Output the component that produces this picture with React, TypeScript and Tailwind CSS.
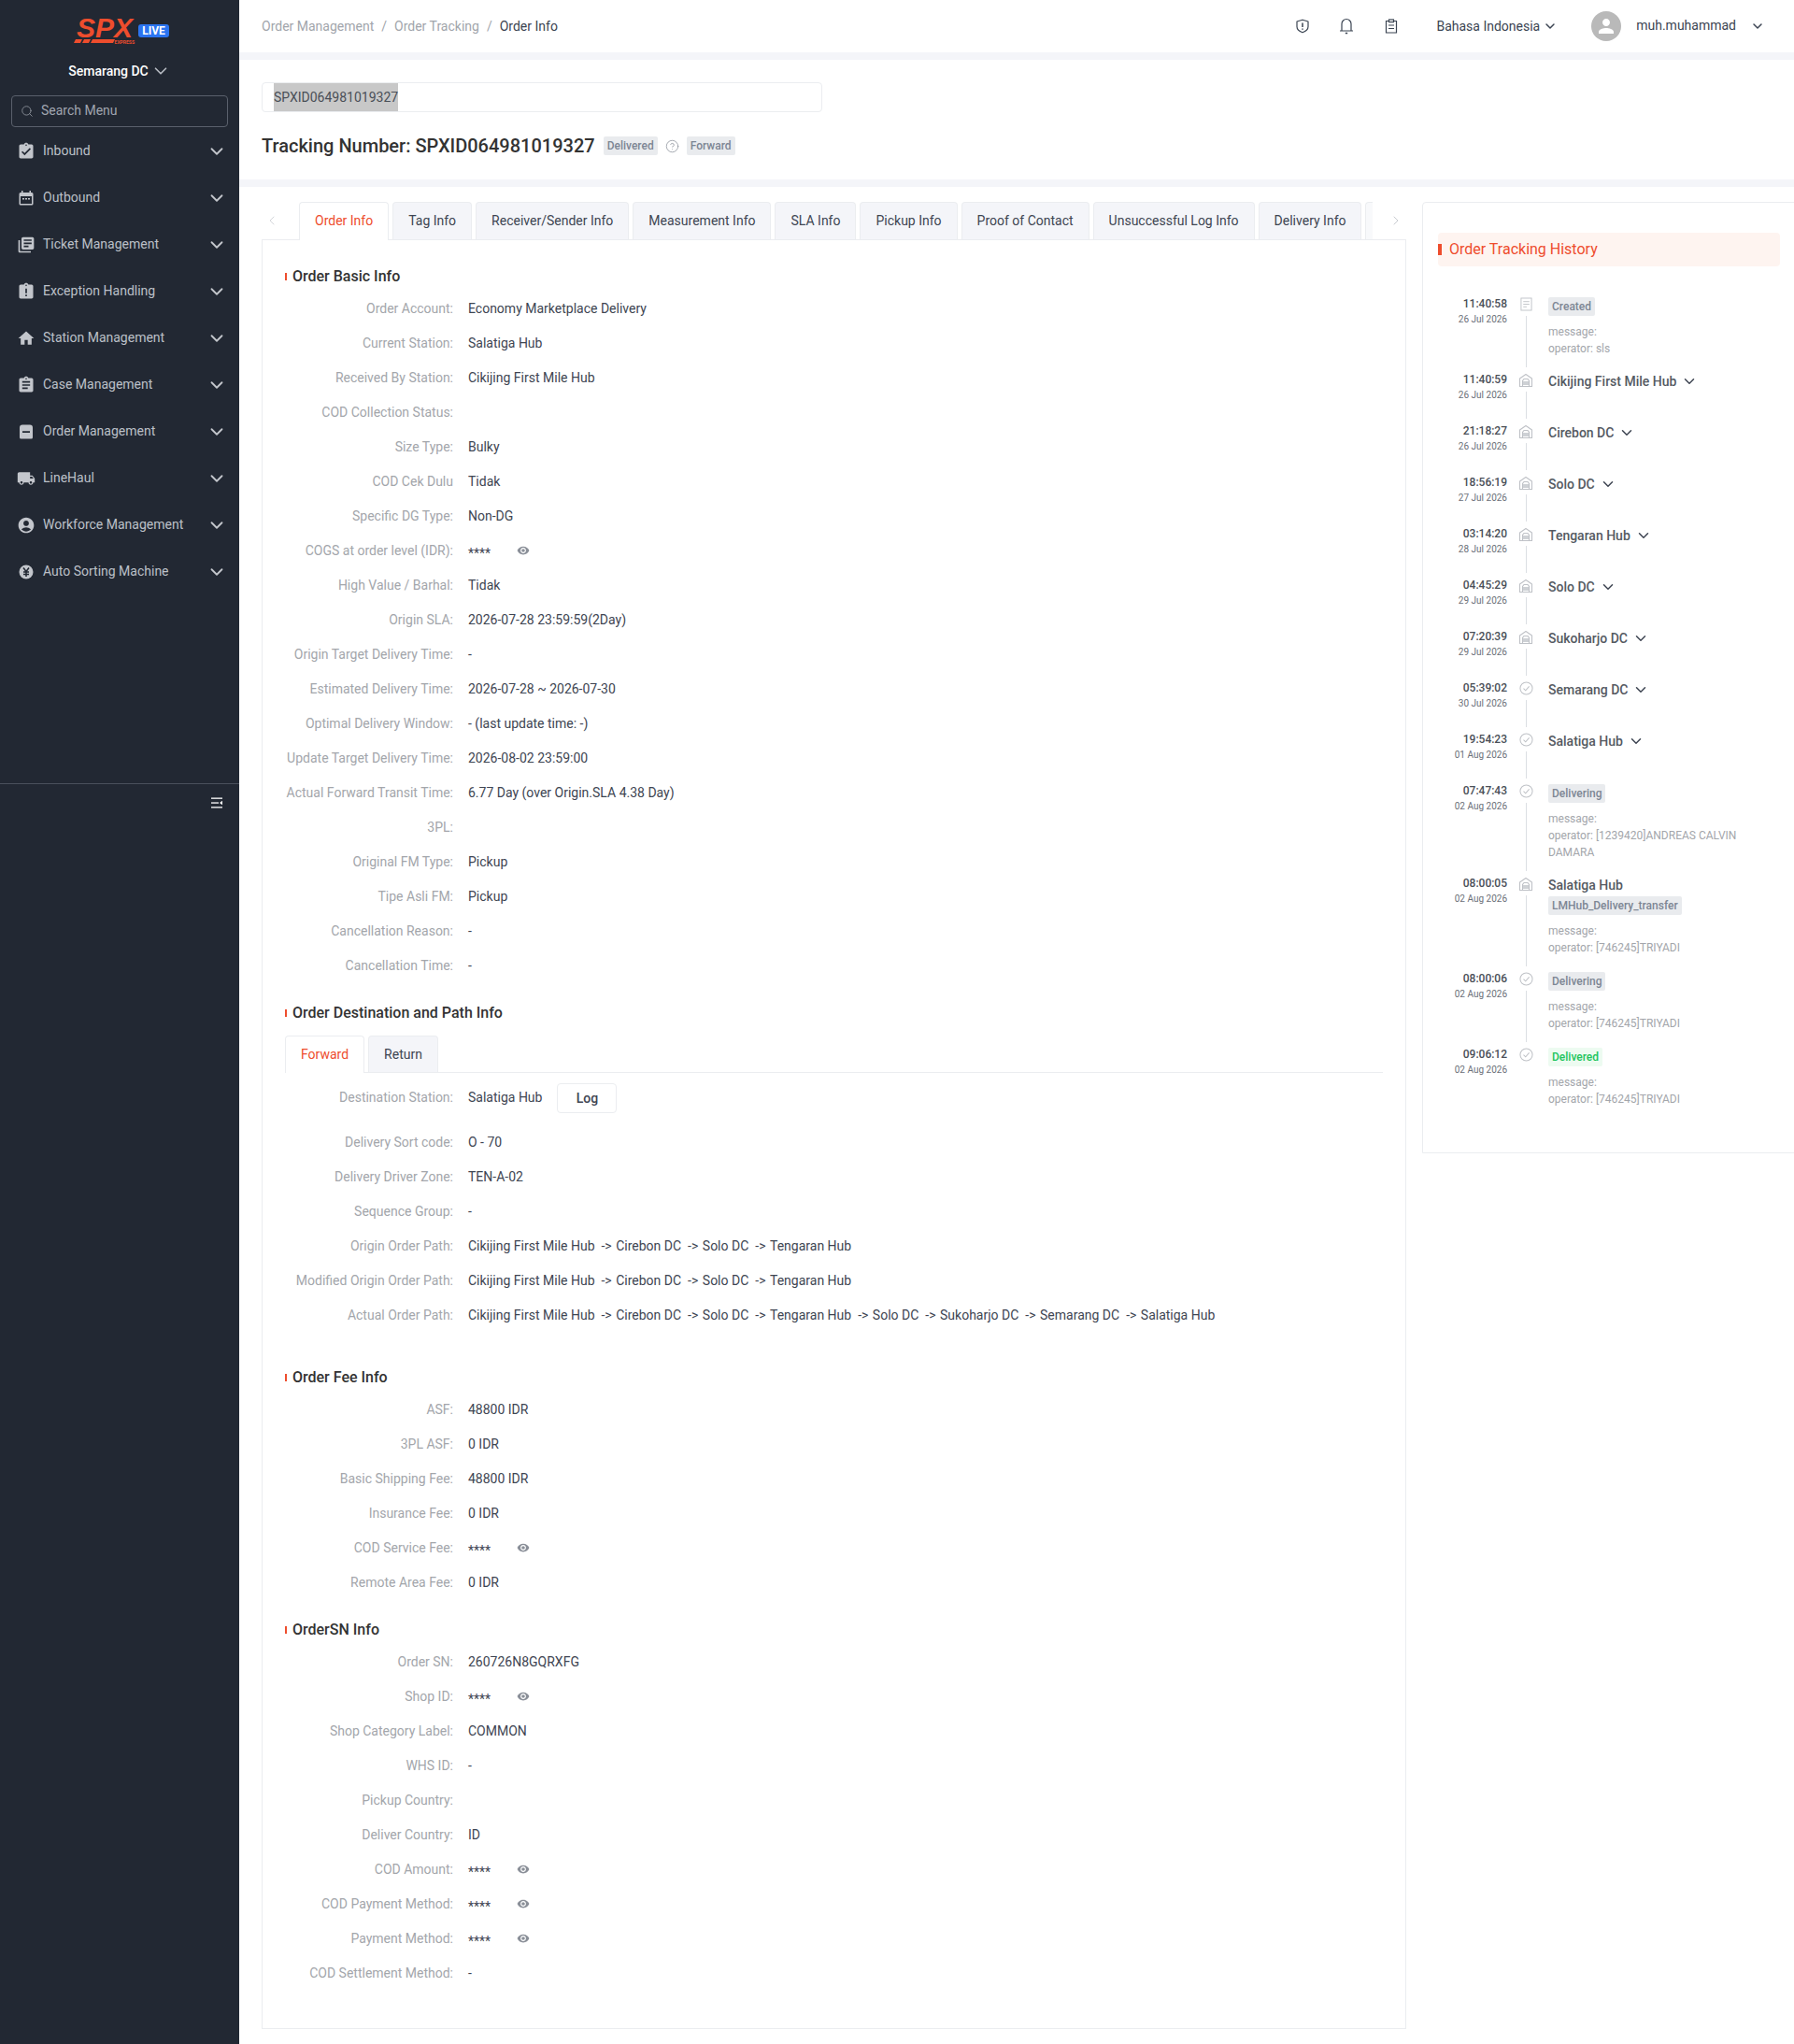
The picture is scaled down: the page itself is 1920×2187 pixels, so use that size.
import { Fragment } from 'react';
import { ChevronDown, ChevronLeft, ChevronRight, Search, CircleHelp } from 'lucide-react';
import {
  MdAssignmentTurnedIn,
  MdLibraryBooks,
  MdAssignmentLate,
  MdHome,
  MdAssignment,
  MdLocalShipping,
  MdAccountCircle,
  MdVisibility,
  MdPerson,
} from 'react-icons/md';

const menuIconClass = 'w-[20px] h-[20px]';

function OutboundIcon() {
  return (
    <svg viewBox="0 0 18 18" className="w-[18px] h-[18px]" fill="currentColor">
      <path fillRule="evenodd" d="M4 1h1.500v2h7V1H14v2h1a1.500 1.500 0 0 1 1.500 1.500V15a1.500 1.500 0 0 1-1.500 1.500H3A1.500 1.500 0 0 1 1.500 15V4.500A1.500 1.500 0 0 1 3 3h1V1zM3 7v8h12V7H3z" />
      <rect x="5" y="9" width="2" height="1.500" />
      <rect x="8" y="9" width="2" height="1.500" />
      <rect x="11" y="9" width="2" height="1.500" />
    </svg>
  );
}

function OrderIcon() {
  return (
    <svg viewBox="0 0 18 18" className="w-[18px] h-[18px]" fill="currentColor">
      <path fillRule="evenodd" d="M5 1.500h8a3 3 0 0 1 3 3V15a1.500 1.500 0 0 1-1.500 1.500h-11A1.500 1.500 0 0 1 2 15V4.500a3 3 0 0 1 3-3zM5 8.200v1.800h8V8.200H5z" />
    </svg>
  );
}

function YenIcon() {
  return (
    <svg viewBox="0 0 18 18" className="w-[18px] h-[18px]">
      <circle cx="9" cy="9" r="7.500" fill="currentColor" />
      <path d="M6 4.500 9 8.500 12 4.500M9 8.500V14M6 9h6M6 11.500h6" fill="none" stroke="#222833" strokeWidth="1.500" />
    </svg>
  );
}

function CollapseIcon() {
  return (
    <svg viewBox="0 0 14 14" className="w-[14px] h-[14px]" fill="#fff">
      <rect x="1" y="1.500" width="12" height="1.300" />
      <rect x="1" y="6.400" width="8" height="1.300" />
      <rect x="1" y="11.200" width="12" height="1.300" />
      <path d="M13 4.800v4.400L10 7z" />
    </svg>
  );
}

function HubIcon() {
  return (
    <svg viewBox="0 0 16 16" className="w-[16px] h-[16px]" fill="none" stroke="#bfc2c7" strokeWidth="1.100">
      <path d="M1.500 14.500V6L8 1.500 14.500 6v8.500z" strokeLinejoin="round" />
      <path d="M4.500 14.500V8.500L6 6.500h4l1.500 2v6" />
      <path d="M5 10h6M5 12h6" strokeWidth="1.300" />
    </svg>
  );
}

function CheckIcon() {
  return (
    <svg viewBox="0 0 16 16" className="w-[15px] h-[15px]" fill="none" stroke="#bfc2c7" strokeWidth="1.100">
      <circle cx="8" cy="8" r="7" />
      <path d="M4.800 8.200 7.200 10.500 11.300 5.800" />
    </svg>
  );
}

function DocIcon() {
  return (
    <svg viewBox="0 0 14 16" className="w-[13px] h-[15px]" fill="none" stroke="#bfc2c7" strokeWidth="1">
      <rect x="1" y="1" width="12" height="14" />
      <path d="M3.500 5h7M3.500 8h7M3.500 11h4" />
    </svg>
  );
}

function ShieldIcon() {
  return (
    <svg viewBox="0 0 14 16" className="w-[14px] h-[16px]" fill="none" stroke="currentColor" strokeWidth="1.200">
      <path d="M7 1.200 13 3v5.500c0 3-2.500 5-6 6.300-3.500-1.300-6-3.300-6-6.300V3z" strokeLinejoin="round" />
      <path d="M7 4.500v4.500M7 10.500v1.300" strokeWidth="1.500" />
    </svg>
  );
}

function BellIcon() {
  return (
    <svg viewBox="0 0 16 18" className="w-[16px] h-[18px]" fill="none" stroke="currentColor" strokeWidth="1.200">
      <path d="M1 14h14M3 14V6.500a5 5 0 0 1 10 0V14" />
      <path d="M6.800 16.500h2.400" strokeWidth="1.500" />
    </svg>
  );
}

function ClipboardIcon() {
  return (
    <svg viewBox="0 0 14 16" className="w-[14px] h-[16px]" fill="none" stroke="currentColor" strokeWidth="1.200">
      <path d="M4.500 2.500H1.500v12.500h11V2.500H9.500" />
      <rect x="4.500" y="1" width="5" height="2.600" />
      <path d="M4 7h6M4 10.500h6" />
    </svg>
  );
}

const menu = [
  { name: 'Inbound', icon: <MdAssignmentTurnedIn className={menuIconClass} /> },
  { name: 'Outbound', icon: <OutboundIcon /> },
  { name: 'Ticket Management', icon: <MdLibraryBooks className={menuIconClass} /> },
  { name: 'Exception Handling', icon: <MdAssignmentLate className={menuIconClass} /> },
  { name: 'Station Management', icon: <MdHome className={menuIconClass} /> },
  { name: 'Case Management', icon: <MdAssignment className={menuIconClass} /> },
  { name: 'Order Management', icon: <OrderIcon /> },
  { name: 'LineHaul', icon: <MdLocalShipping className={menuIconClass} /> },
  { name: 'Workforce Management', icon: <MdAccountCircle className={menuIconClass} /> },
  { name: 'Auto Sorting Machine', icon: <YenIcon /> },
];

const tabs = ['Order Info', 'Tag Info', 'Receiver/Sender Info', 'Measurement Info', 'SLA Info', 'Pickup Info', 'Proof of Contact', 'Unsuccessful Log Info', 'Delivery Info'];

type Row = { label: string; value?: string; secret?: boolean; path?: string[]; noColon?: boolean };

const basicRows: Row[] = [
  { label: 'Order Account', value: 'Economy Marketplace Delivery' },
  { label: 'Current Station', value: 'Salatiga Hub' },
  { label: 'Received By Station', value: 'Cikijing First Mile Hub' },
  { label: 'COD Collection Status' },
  { label: 'Size Type', value: 'Bulky' },
  { label: 'COD Cek Dulu', value: 'Tidak', noColon: true },
  { label: 'Specific DG Type', value: 'Non-DG' },
  { label: 'COGS at order level (IDR)', secret: true },
  { label: 'High Value / Barhal', value: 'Tidak' },
  { label: 'Origin SLA', value: '2026-07-28 23:59:59(2Day)' },
  { label: 'Origin Target Delivery Time', value: '-' },
  { label: 'Estimated Delivery Time', value: '2026-07-28 ~ 2026-07-30' },
  { label: 'Optimal Delivery Window', value: '- (last update time: -)' },
  { label: 'Update Target Delivery Time', value: '2026-08-02 23:59:00' },
  { label: 'Actual Forward Transit Time', value: '6.77 Day (over Origin.SLA 4.38 Day)' },
  { label: '3PL' },
  { label: 'Original FM Type', value: 'Pickup' },
  { label: 'Tipe Asli FM', value: 'Pickup' },
  { label: 'Cancellation Reason', value: '-' },
  { label: 'Cancellation Time', value: '-' },
];

const shortPath = ['Cikijing First Mile Hub', 'Cirebon DC', 'Solo DC', 'Tengaran Hub'];
const fullPath = ['Cikijing First Mile Hub', 'Cirebon DC', 'Solo DC', 'Tengaran Hub', 'Solo DC', 'Sukoharjo DC', 'Semarang DC', 'Salatiga Hub'];

const pathRows: Row[] = [
  { label: 'Delivery Driver Zone', value: 'TEN-A-02' },
  { label: 'Sequence Group', value: '-' },
  { label: 'Origin Order Path', path: shortPath },
  { label: 'Modified Origin Order Path', path: shortPath },
  { label: 'Actual Order Path', path: fullPath },
];

const feeRows: Row[] = [
  { label: 'ASF', value: '48800 IDR' },
  { label: '3PL ASF', value: '0 IDR' },
  { label: 'Basic Shipping Fee', value: '48800 IDR' },
  { label: 'Insurance Fee', value: '0 IDR' },
  { label: 'COD Service Fee', secret: true },
  { label: 'Remote Area Fee', value: '0 IDR' },
];

const snRows: Row[] = [
  { label: 'Order SN', value: '260726N8GQRXFG' },
  { label: 'Shop ID', secret: true },
  { label: 'Shop Category Label', value: 'COMMON' },
  { label: 'WHS ID', value: '-' },
  { label: 'Pickup Country' },
  { label: 'Deliver Country', value: 'ID' },
  { label: 'COD Amount', secret: true },
  { label: 'COD Payment Method', secret: true },
  { label: 'Payment Method', secret: true },
  { label: 'COD Settlement Method', value: '-' },
];

type Track = {
  time: string;
  date: string;
  icon: 'doc' | 'hub' | 'check';
  height: string;
  name?: string;
  caret?: boolean;
  tag?: string;
  tagClass?: string;
  operator?: string;
};

const grayTag = 'bg-[#e9ebee] text-[#7d8694]';

const history: Track[] = [
  { time: '11:40:58', date: '26 Jul 2026', icon: 'doc', height: 'h-[81px]', tag: 'Created', tagClass: grayTag, operator: 'operator: sls' },
  { time: '11:40:59', date: '26 Jul 2026', icon: 'hub', height: 'h-[55px]', name: 'Cikijing First Mile Hub', caret: true },
  { time: '21:18:27', date: '26 Jul 2026', icon: 'hub', height: 'h-[55px]', name: 'Cirebon DC', caret: true },
  { time: '18:56:19', date: '27 Jul 2026', icon: 'hub', height: 'h-[55px]', name: 'Solo DC', caret: true },
  { time: '03:14:20', date: '28 Jul 2026', icon: 'hub', height: 'h-[55px]', name: 'Tengaran Hub', caret: true },
  { time: '04:45:29', date: '29 Jul 2026', icon: 'hub', height: 'h-[55px]', name: 'Solo DC', caret: true },
  { time: '07:20:39', date: '29 Jul 2026', icon: 'hub', height: 'h-[55px]', name: 'Sukoharjo DC', caret: true },
  { time: '05:39:02', date: '30 Jul 2026', icon: 'check', height: 'h-[55px]', name: 'Semarang DC', caret: true },
  { time: '19:54:23', date: '01 Aug 2026', icon: 'check', height: 'h-[55px]', name: 'Salatiga Hub', caret: true },
  { time: '07:47:43', date: '02 Aug 2026', icon: 'check', height: 'h-[99px]', tag: 'Delivering', tagClass: grayTag, operator: 'operator: [1239420]ANDREAS CALVIN DAMARA' },
  { time: '08:00:05', date: '02 Aug 2026', icon: 'hub', height: 'h-[102px]', name: 'Salatiga Hub', tag: 'LMHub_Delivery_transfer', tagClass: grayTag, operator: 'operator: [746245]TRIYADI' },
  { time: '08:00:06', date: '02 Aug 2026', icon: 'check', height: 'h-[81px]', tag: 'Delivering', tagClass: grayTag, operator: 'operator: [746245]TRIYADI' },
  { time: '09:06:12', date: '02 Aug 2026', icon: 'check', height: 'h-[81px]', tag: 'Delivered', tagClass: 'bg-[#edfbf1] text-[#22c55e]', operator: 'operator: [746245]TRIYADI' },
];

function Logo() {
  return (
    <div className="relative w-[66px] h-[32px]">
      <span className="absolute left-[3px] top-[0px] text-[30px] leading-[28px] font-bold italic text-[#ee4d2d] [font-family:'Liberation_Sans',sans-serif]">SPX</span>
      <svg viewBox="0 0 44 4" className="absolute left-0 top-[26px] w-[44px] h-[4px]" fill="#ee4d2d">
        <path d="M2 0h7L7 4H0zM11 0h7l-2 4H9zM20 0h24l-2 4H18z" />
      </svg>
      <span className="absolute right-[1px] top-[26px] text-[5px] leading-[6px] font-bold text-[#ee4d2d]">EXPRESS</span>
    </div>
  );
}

function Sidebar() {
  return (
    <aside className="w-[256px] shrink-0 bg-[#222833] flex flex-col">
      <div className="h-[64px] flex items-start justify-center gap-[3px] pt-[16px] pl-[4px]">
        <Logo />
        <span className="mt-[10px] h-[14px] w-[33px] rounded-[3px] bg-[#2b74f0] text-white text-[12px] leading-[14px] font-bold text-center">LIVE</span>
      </div>

      <div className="h-[24px] flex items-center justify-center gap-[2px] text-white text-[14px] font-medium">
        Semarang DC
        <ChevronDown className="w-[22px] h-[22px] text-[#b8bcc4]" strokeWidth={1.800} />
      </div>

      {/* Search */}
      <div className="mx-[12px] mt-[14px] h-[34px] border border-[#5a606c] rounded-[4px] flex items-center pl-[9px] text-[#a0a5b0] text-[14px]">
        <Search className="w-[14px] h-[14px] mr-[8px] text-[#8d929c]" strokeWidth={1.500} />
        <span className="-mt-[2px]">Search Menu</span>
      </div>

      {/* Menu */}
      <nav className="mt-[1.500px]">
        {menu.map(item => (
          <div key={item.name} className="h-[50px] flex items-center pl-[18px] pr-[13px] text-[#bcc0c8] text-[14px]">
            <span className="w-[20px] h-[20px] -mt-[1px] flex items-center justify-center text-[#c3c6cc]">{item.icon}</span>
            <span className="ml-[8px] flex-1 -mt-[2px]">{item.name}</span>
            <ChevronDown className="w-[22px] h-[22px] -mt-[1px] text-[#c3c6cc]" strokeWidth={2} />
          </div>
        ))}
      </nav>

      {/* Collapse */}
      <div className="mt-[200px] border-t border-[#4a505c] h-[42px] flex items-center justify-end pr-[17px]">
        <CollapseIcon />
      </div>
    </aside>
  );
}

function Header() {
  return (
    <header className="h-[64px] shrink-0 border-b-[8px] border-[#f4f5f9] flex items-center pl-[24px] pr-[31px] text-[14px]">
      <div className="flex items-center text-[#a1a5ab]">
        <span>Order Management</span>
        <span className="mx-[8px]">/</span>
        <span>Order Tracking</span>
        <span className="mx-[8px]">/</span>
        <span className="text-[#3b4452]">Order Info</span>
      </div>
      <div className="ml-auto flex items-center text-[#3b4452]">
        <ShieldIcon />
        <span className="ml-[32px]"><BellIcon /></span>
        <span className="ml-[33px]"><ClipboardIcon /></span>
        <span className="ml-[41px]">Bahasa Indonesia</span>
        <ChevronDown className="w-[16px] h-[16px] ml-[3px]" strokeWidth={2.200} />
        <span className="ml-[36px] w-[32px] h-[32px] rounded-full bg-[#b9b9b9] flex items-center justify-center">
          <MdPerson className="w-[24px] h-[24px] text-white" />
        </span>
        <span className="ml-[16px] -mt-[2px]">muh.muhammad</span>
        <ChevronDown className="w-[16px] h-[16px] ml-[15px]" strokeWidth={2.200} />
      </div>
    </header>
  );
}

function SearchBlock() {
  return (
    <section className="h-[136px] shrink-0 border-b-[8px] border-[#f4f5f9] pl-[24px] pt-[24px]">
      <div className="w-[600px] h-[32px] border border-[#ebedf0] rounded-[4px] flex items-center pl-[12px] text-[14px] text-[#4a4f57]">
        <span className="bg-[#c8c8c8] leading-[30px]">SPXID064981019327</span>
      </div>
      <div className="mt-[22px] flex items-center">
        <h1 className="text-[20px] leading-[28px] font-medium text-[#333]">Tracking Number: SPXID064981019327</h1>
        <span className="ml-[9px] h-[20px] px-[4px] rounded-[2px] bg-[#e9ebee] text-[#7d8694] text-[12px] leading-[20px] font-medium">Delivered</span>
        <CircleHelp className="ml-[8px] w-[15px] h-[15px] text-[#8a8f98]" strokeWidth={1.200} />
        <span className="ml-[8px] h-[20px] px-[4px] rounded-[2px] bg-[#e9ebee] text-[#7d8694] text-[12px] leading-[20px] font-medium">Forward</span>
      </div>
    </section>
  );
}

function SectionTitle({ children, className }: { children: string; className: string }) {
  return (
    <div className={`flex items-center h-[22px] ${className}`}>
      <span className="w-[2px] h-[8px] bg-[#ee4d2d]" />
      <span className="ml-[6px] text-[16px] leading-[22px] font-medium text-[#333]">{children}</span>
    </div>
  );
}

function InfoRow({ row }: { row: Row }) {
  return (
    <div className="h-[37px] flex items-center text-[14px]">
      <span className="w-[180px] shrink-0 text-right text-[#a3a6ab]">{row.noColon ? row.label : `${row.label}:`}</span>
      {row.secret ? (
        <>
          <span className="ml-[16px] pt-[5px] text-[#3e4552]">****</span>
          <MdVisibility className="ml-[28px] -mt-[1px] w-[14px] h-[14px] text-[#8a8f98]" />
        </>
      ) : row.path ? (
        <span className="ml-[16px] text-[#3e4552] whitespace-nowrap">
          {row.path.map((stop, i) => (
            <Fragment key={i}>
              {i > 0 && <span className="ml-[7px] mr-[4.500px]">-&gt;</span>}
              {stop}
            </Fragment>
          ))}
        </span>
      ) : (
        <span className="ml-[16px] text-[#3e4552] whitespace-nowrap">{row.value}</span>
      )}
    </div>
  );
}

function OrderInfoPanel() {
  return (
    <div className="w-[1225px] shrink-0">
      {/* Tabs */}
      <div className="h-[40px] flex relative">
        <div className="w-[40px] flex items-center justify-center pr-[18px]">
          <ChevronLeft className="w-[16px] h-[16px] text-[#d5d7db]" strokeWidth={1.500} />
        </div>
        <div className="flex-1 h-[41px] overflow-hidden flex gap-[4px] relative z-10">
          {tabs.map((tab, i) => (
            <div
              key={tab}
              className={
                i === 0
                  ? 'h-[41px] px-[16px] shrink-0 border border-[#ebedf0] border-b-0 rounded-t-[4px] bg-white text-[#ee4d2d] text-[14px] leading-[38px]'
                  : 'h-[40px] px-[16px] shrink-0 border border-[#ebedf0] border-b-0 rounded-t-[4px] bg-[#f4f5f9] text-[#3e4552] text-[14px] leading-[38px]'
              }
            >
              {tab}
            </div>
          ))}
          <div className="h-[40px] flex-1 border-l border-t border-[#ebedf0] rounded-tl-[4px] bg-[#f8f9fb]" />
        </div>
        <div className="w-[36px] flex items-center justify-center pl-[13px]">
          <ChevronRight className="w-[16px] h-[16px] text-[#c9ccd1]" strokeWidth={1.500} />
        </div>
      </div>

      {/* Content */}
      <div className="h-[1915px] border border-[#ebedf0] px-[24px] pt-[28px]">
        <SectionTitle className="mb-[5px]">Order Basic Info</SectionTitle>
        {basicRows.map(row => <InfoRow key={row.label} row={row} />)}

        <SectionTitle className="mt-[21px]">Order Destination and Path Info</SectionTitle>
        <div className="mt-[13px] h-[40px] w-[1175px] border-b border-[#ebedf0] flex gap-[4px]">
          <div className="h-[40px] w-[85px] border border-[#ebedf0] border-b-0 rounded-t-[4px] bg-white text-[#ee4d2d] text-[14px] leading-[38px] text-center">Forward</div>
          <div className="h-[39px] w-[75px] border border-[#ebedf0] border-b-0 rounded-t-[4px] bg-[#f4f5f9] text-[#3e4552] text-[14px] leading-[38px] text-center">Return</div>
        </div>
        <div className="mt-[8px] h-[37px] flex items-center text-[14px]">
          <span className="w-[180px] text-right text-[#a3a6ab]">Destination Station:</span>
          <span className="ml-[16px] text-[#3e4552]">Salatiga Hub</span>
          <span className="ml-[16px] w-[64px] h-[32px] border border-[#ebedf0] rounded-[4px] text-center leading-[30px] font-medium text-[#3e4552]">Log</span>
        </div>
        <div className="mt-[11px]">
          <InfoRow row={{ label: 'Delivery Sort code', value: 'O - 70' }} />
          {pathRows.map(row => <InfoRow key={row.label} row={row} />)}
        </div>

        <SectionTitle className="mt-[37px] mb-[5px]">Order Fee Info</SectionTitle>
        {feeRows.map(row => <InfoRow key={row.label} row={row} />)}

        <SectionTitle className="mt-[21px] mb-[5px]">OrderSN Info</SectionTitle>
        {snRows.map(row => <InfoRow key={row.label} row={row} />)}
      </div>
    </div>
  );
}

function TrackIcon({ icon }: { icon: Track['icon'] }) {
  if (icon === 'doc') return <DocIcon />;
  if (icon === 'hub') return <HubIcon />;
  return <CheckIcon />;
}

function TrackingPanel() {
  return (
    <div className="ml-[17px] w-[400px] h-[1018px] shrink-0 border border-[#ebedf0] rounded-tl-[4px] pt-[32px] pl-[16px]">
      <div className="w-[366px] h-[36px] bg-[#fef4f0] rounded-[4px] flex items-center">
        <span className="w-[4px] h-[12px] bg-[#ee4d2d]" />
        <span className="ml-[8px] text-[16px] text-[#ee4d2d]">Order Tracking History</span>
      </div>
      <div className="mt-[31px]">
        {history.map((t, i) => (
          <div key={t.time} className={`flex ${t.height}`}>
            <div className="w-[74px] shrink-0 text-right">
              <div className="text-[12px] leading-[18px] font-medium text-[#4a4f57]">{t.time}</div>
              <div className="text-[10px] leading-[16px] text-[#6b7078]">{t.date}</div>
            </div>
            <div className="w-[24px] ml-[8px] shrink-0 flex flex-col items-center pt-[1px]">
              <span className="h-[17px] flex items-center"><TrackIcon icon={t.icon} /></span>
              {i < history.length - 1 && <span className="w-px flex-1 mt-[4px] mb-[4px] bg-[#dcdfe3]" />}
            </div>
            <div className="ml-[12px] w-[236px]">
              {t.name && (
                <div className="h-[22px] flex items-center gap-[5px] text-[14px] font-medium text-[#555a62]">
                  {t.name}
                  {t.caret && <ChevronDown className="w-[18px] h-[18px] text-[#3e4552]" strokeWidth={2} />}
                </div>
              )}
              {t.tag && (
                <div className={t.name ? '-mt-[2px]' : '-mt-[1px]'}>
                  <span className={`inline-block h-[20px] px-[4px] rounded-[2px] text-[12px] leading-[20px] font-medium ${t.tagClass}`}>{t.tag}</span>
                </div>
              )}
              {t.operator && (
                <div className="mt-[7px] text-[12px] leading-[18px] text-[#a3a6ab]">
                  <div>message:</div>
                  <div>{t.operator}</div>
                </div>
              )}
            </div>
          </div>
        ))}
      </div>
    </div>
  );
}

export default function App() {
  return (
    <div className="w-[1920px] h-[2187px] overflow-hidden flex bg-white [font-family:Roboto,sans-serif]">
      <Sidebar />
      <main className="flex-1 min-w-0 flex flex-col">
        <Header />
        <SearchBlock />
        <div className="flex pl-[24px] pt-[16px]">
          <OrderInfoPanel />
          <TrackingPanel />
        </div>
      </main>
    </div>
  );
}
